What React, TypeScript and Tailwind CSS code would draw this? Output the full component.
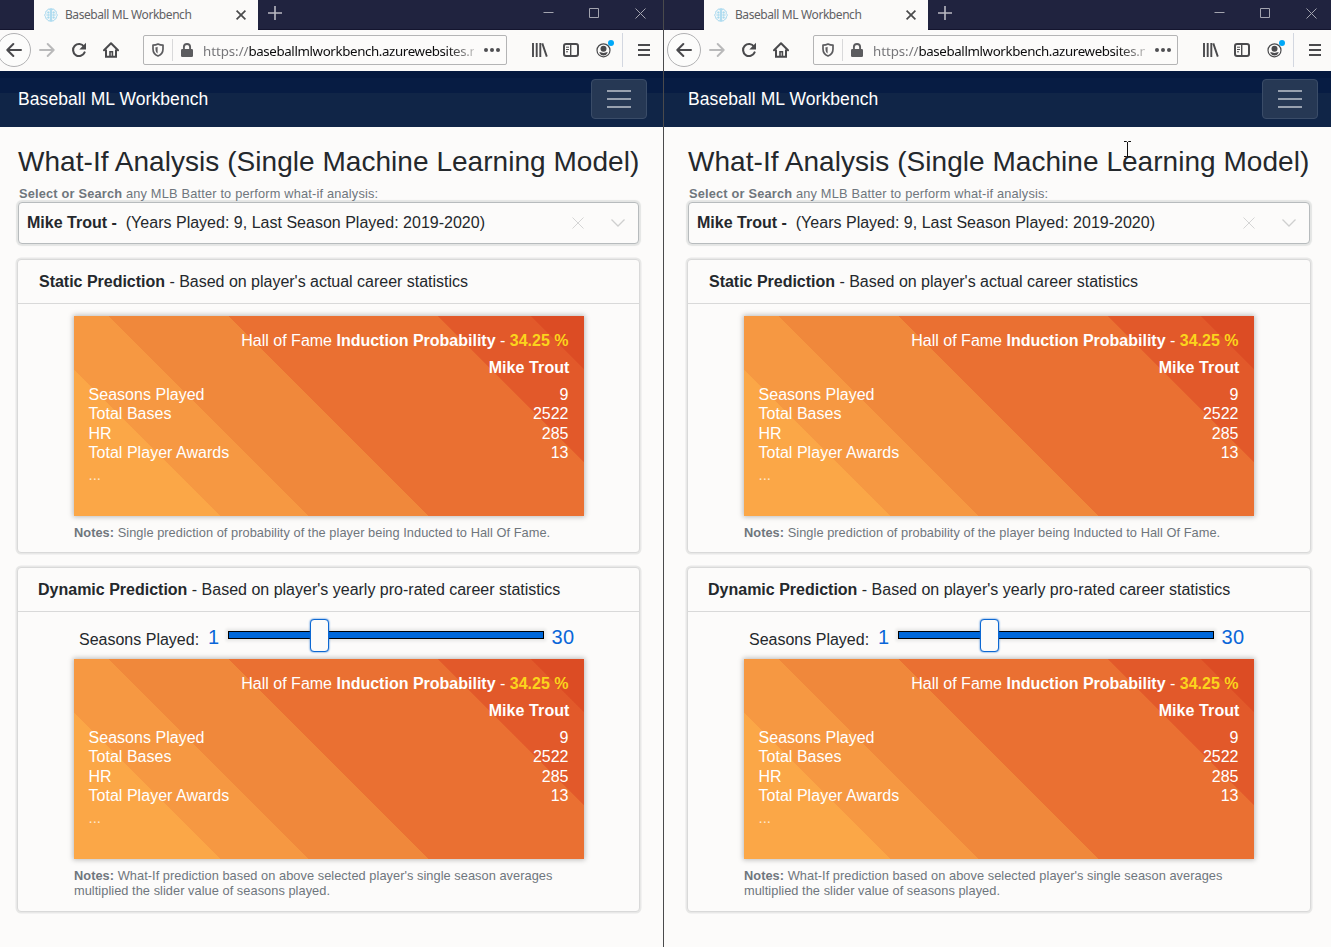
import type { ReactNode } from "react";

const STATS = [
  ["Seasons Played", "9"],
  ["Total Bases", "2522"],
  ["HR", "285"],
  ["Total Player Awards", "13"],
];

function BrainIcon() {
  return (
    <svg width="14" height="16" viewBox="0 0 14 16" fill="none" stroke="#9fd5ee" strokeWidth="1" className="shrink-0">
      <path d="M6.3 1.2v13.6M7.7 1.2v13.6" />
      <path d="M6 2.3C4 1.5 3.2 3 3.2 3.6 1.6 4 1.4 5.4 1.9 6.3.3 7.2.5 9.4 1.8 10c-.3 1.7 1 2.5 1.7 2.6.4 1.4 2 1.6 2.7.8M8 2.3c2-.8 2.8.7 2.8 1.3 1.6.4 1.8 1.8 1.3 2.7 1.6.9 1.4 3.1.1 3.7.3 1.7-1 2.5-1.7 2.6-.4 1.4-2 1.6-2.7.8" />
      <path d="M3.2 5.5h2.3M2.2 8h3.5M3.3 10.5h2.2M8.5 5.5h2.3M8.3 8h3.5M8.5 10.5h2.2M4.2 4v8M9.8 4v8" strokeWidth=".8" />
    </svg>
  );
}

function TabStrip() {
  return (
    <div className="flex h-[30px] shrink-0 bg-[#20233f] pl-[34px] shadow-[inset_0_-1px_0_#14152f]">
      <div className="flex h-[30px] w-[224px] shrink-0 items-center bg-[#fbfaf9] pl-[10px]">
        <BrainIcon />
        <span className="ml-[7px] w-[170px] whitespace-nowrap font-['Noto_Sans',sans-serif] text-[12px] leading-[30px] tracking-[-0.440px] text-[#616164] [word-spacing:0.3px]">
          Baseball ML Workbench
        </span>
        <svg width="12" height="12" viewBox="0 0 12 12" stroke="#4a4a4c" strokeWidth="1.7" className="shrink-0">
          <path d="M1.6 1.6l8.8 8.8M10.4 1.6l-8.8 8.8" />
        </svg>
      </div>
      <svg width="14" height="14" viewBox="0 0 14 14" stroke="#b9b9c2" strokeWidth="1.6" className="ml-[10px] mt-[6px]">
        <path d="M7 0v14M0 7h14" />
      </svg>
      <div className="ml-auto mr-[17px] flex gap-[35px] pt-[8px]">
        <svg width="11" height="11" viewBox="0 0 11 11" stroke="#a3a4af">
          <path d="M.5 4.5h10" />
        </svg>
        <svg width="11" height="11" viewBox="0 0 11 11" fill="none" stroke="#a3a4af">
          <path d="M.5.5h9v9h-9z" />
        </svg>
        <svg width="11" height="11" viewBox="0 0 11 11" stroke="#a3a4af">
          <path d="M.5.5l10 10M10.5.5l-10 10" />
        </svg>
      </div>
    </div>
  );
}

function Toolbar() {
  return (
    <div className="flex h-[41px] shrink-0 items-center bg-[#fbfaf9] pb-[1px]">
      <div className="-ml-[3px] flex h-[34px] w-[34px] shrink-0 items-center justify-center rounded-full border border-[#b1b1b3] bg-[#fcfcfb]">
        <svg width="16" height="16" viewBox="0 0 16 16" fill="none" stroke="#4a4a4d" strokeWidth="2" strokeLinecap="round" strokeLinejoin="round">
          <path d="M15 8H1.5M7.3 2L1.3 8l6 6" />
        </svg>
      </div>
      <svg width="16" height="16" viewBox="0 0 16 16" fill="none" stroke="#b9b9ba" strokeWidth="1.9" strokeLinecap="round" strokeLinejoin="round" className="ml-[8px] shrink-0">
        <path d="M1 8h13.5M8.7 2l6 6-6 6" />
      </svg>
      <svg width="16" height="16" viewBox="0 0 16 16" fill="none" stroke="#4a4a4d" strokeWidth="2.1" className="ml-[16px] shrink-0">
        <path d="M13 4.6A6 6 0 1 0 13.6 10.4" strokeLinecap="round" />
        <path d="M15 .8v6.7H8.3z" fill="#4a4a4d" stroke="none" />
      </svg>
      <svg width="16" height="16" viewBox="0 0 16 16" fill="none" stroke="#4a4a4d" strokeWidth="2" className="ml-[16px] shrink-0">
        <path d="M1 8.3L8 1.3l7 7" strokeLinecap="round" strokeLinejoin="round" />
        <path d="M3 7.5v7.3h10V7.5" />
        <path d="M7 15V9.7h2.4V15" strokeWidth="1.6" />
      </svg>
      <div className="ml-[24px] flex h-[30px] flex-1 items-center rounded-[2px] border border-[#b4b4b5] bg-[#fcfbfa]">
        <svg width="12" height="14" viewBox="0 0 12 14" className="ml-[8px] shrink-0">
          <path d="M6 1C4.600 1.700 2.800 2.100 1 2.100V6c0 3.200 1.700 5.700 5 7 3.300-1.300 5-3.800 5-7V2.100C9.200 2.100 7.400 1.700 6 1z" fill="none" stroke="#5c5c5f" strokeWidth="1.7" strokeLinejoin="round" />
          <path d="M5.600 3.700v6.800C4.200 9.500 3.500 8 3.500 6V4.300c.8-.1 1.500-.3 2.100-.6z" fill="#5c5c5f" />
        </svg>
        <div className="ml-[8px] h-[22px] w-px bg-[#d9d9da]" />
        <svg width="12" height="14" viewBox="0 0 12 14" className="ml-[8px] shrink-0">
          <path d="M2.900 7V4.100a3.100 3.100 0 0 1 6.200 0V7" fill="none" stroke="#5c5c5f" strokeWidth="1.900" />
          <rect x="0" y="6" width="12" height="8" rx="1.300" fill="#5c5c5f" />
        </svg>
        <div className="ml-[10px] w-0 flex-1 overflow-hidden whitespace-nowrap pt-[2px] font-['Noto_Sans',sans-serif] text-[13.3px] leading-[20px] tracking-[-0.370px] text-[#0c0c0d] [mask-image:linear-gradient(to_right,black_90%,transparent_103%)]">
          <span className="tracking-[-0.050px] text-[#77777a]">https://</span>baseballmlworkbench.azurewebsites.n
        </div>
        <svg width="16" height="4" viewBox="0 0 16 4" fill="#4f4f52" className="ml-[10px] mr-[6px] shrink-0">
          <circle cx="2" cy="2" r="2" />
          <circle cx="8" cy="2" r="2" />
          <circle cx="14" cy="2" r="2" />
        </svg>
      </div>
      <svg width="16" height="14" viewBox="0 0 16 14" stroke="#4a4a4d" strokeWidth="1.900" className="ml-[25px] shrink-0">
        <path d="M1 0v14M4.700 0v14M8.300 0v14M10.300 .4l4.500 13.200" />
      </svg>
      <svg width="16" height="14" viewBox="0 0 16 14" fill="none" stroke="#4a4a4d" className="ml-[15px] shrink-0">
        <rect x="1" y="1" width="14" height="12" rx="2" strokeWidth="2" />
        <path d="M7.700 1v12" strokeWidth="1.400" />
        <path d="M3 4.200h3M3 6.500h3M3 8.800h2" strokeWidth="1" />
      </svg>
      <div className="relative ml-[17px] h-[16px] w-[18px] shrink-0">
        <svg width="16" height="16" viewBox="0 0 16 16">
          <circle cx="7.500" cy="8.300" r="6.500" fill="none" stroke="#4a4a4d" strokeWidth="1.200" />
          <circle cx="7.500" cy="6.700" r="3" fill="#4a4a4d" />
          <path d="M3.200 10.400c1.200-.6 2.200.5 4.300.5s3.100-1.100 4.300-.5A5 5 0 0 1 7.500 13.400a5 5 0 0 1-4.300-3z" fill="#4a4a4d" />
        </svg>
        <span className="absolute -top-[2px] left-[12px] h-[6px] w-[6px] rounded-full bg-[#00a8f8]" />
      </div>
      <div className="ml-[8px] h-[34px] w-px bg-[#d3d7e0]" />
      <div className="ml-[15px] mr-[13px] flex w-[12px] shrink-0 flex-col gap-[3px]">
        <span className="h-[2px] bg-[#4a4a4d]" />
        <span className="h-[2px] bg-[#4a4a4d]" />
        <span className="h-[2px] bg-[#4a4a4d]" />
      </div>
    </div>
  );
}

function Navbar() {
  return (
    <div className="flex h-[56px] shrink-0 items-center justify-between bg-[linear-gradient(to_bottom,#04183e_0,#04183e_7px,#071c43_7px,#071c43_22px,#102547_22px)] pl-[18px] pr-[16px]">
      <span className="text-[17.5px] tracking-[0.080px] text-white">Baseball ML Workbench</span>
      <div className="flex h-[40px] w-[56px] flex-col items-center justify-center gap-[6px] rounded-[4px] border border-[#3a4c68] bg-[#263854]">
        <span className="h-[2px] w-[24px] bg-[#98a1af]" />
        <span className="h-[2px] w-[24px] bg-[#98a1af]" />
        <span className="h-[2px] w-[24px] bg-[#98a1af]" />
      </div>
    </div>
  );
}

function PredictionCard() {
  return (
    <div className="h-[200px] w-[510px] bg-[linear-gradient(45deg,#fba747_20.56%,#f69842_20.6%,#f69842_32.96%,#f0883b_33%,#f0883b_49.9%,#ea7032_49.95%,#ea7032_79.4%,#e2592a_79.45%,#e2592a_92.5%,#dc4c24_92.55%)] pl-[14.500px] pr-[15.500px] pt-[15px] text-[16px] text-white shadow-[0_0_5px_1px_rgba(0,0,0,0.25)]">
      <div className="text-right leading-[20px]">
        Hall of Fame <b>Induction Probability</b> - <b className="text-[#fbd41c]">34.25 %</b>
      </div>
      <div className="-mr-[1px] mt-[7px] text-right font-bold leading-[20px] tracking-[0.080px]">Mike Trout</div>
      <div className="mt-[7px] leading-[19.400px]">
        {STATS.map(([label, value]) => (
          <div key={label} className="flex justify-between">
            <span className="tracking-[0.030px]">{label}</span>
            <span>{value}</span>
          </div>
        ))}
      </div>
      <div className="mt-[4px] text-[15px] leading-[16px] text-[#ffe9cf]">...</div>
    </div>
  );
}

function Panel({ title, text, titleClass, children }: { title: string; text: string; titleClass: string; children: ReactNode }) {
  return (
    <section className="-mx-px rounded-[4px] border border-[#d9d9d9] bg-[#fcfbfa] shadow-[0_0_0_1.500px_#e8e8e7]">
      <div className={`h-[44px] border-b border-[#d9d9d9] text-[16px] leading-[44px] text-[#24282c] ${titleClass}`}>
        <b>{title}</b> - {text}
      </div>
      {children}
    </section>
  );
}

function Notes({ children }: { children: ReactNode }) {
  return (
    <p className="w-[500px] text-[12.800px] leading-[15px] tracking-[0.045px] text-[#6f767d]">
      <b>Notes:</b> {children}
    </p>
  );
}

function Slider() {
  return (
    <div className="flex h-[47px] items-center pl-[5px]">
      <span className="mt-[8px] text-[16px] text-[#24282c]">Seasons Played:</span>
      <span className="ml-[9px] mt-[3px] w-[12px] text-[20px] text-[#0a66d8]">1</span>
      <div className="relative -mt-[2px] ml-[8px] h-[8px] w-[315.500px] border border-black bg-[#0068da] shadow-[0_0_3px_2px_#e6e6e5]">
        <span className="absolute -top-[13px] left-[81px] h-[33px] w-[19px] rounded-[4px] border-[1.500px] border-[#0d68d2] bg-[#fcfbfa] shadow-[0_0_2px_#0d68d2]" />
      </div>
      <span className="ml-[8px] mt-[3px] text-[20px] tracking-[0.200px] text-[#0a66d8]">30</span>
    </div>
  );
}

function Page() {
  return (
    <main className="flex-1 bg-[#fcfbfa] pl-[18px] pr-[24px]">
      <h1 className="whitespace-nowrap pt-[18px] text-[28px] leading-[34px] tracking-[0.040px] text-[#24282c]">What-If Analysis (Single Machine Learning Model)</h1>
      <p className="pl-px pt-[6px] text-[12.800px] leading-[17px] tracking-[0.180px] text-[#6f767d]">
        <b>Select or Search</b> any MLB Batter to perform what-if analysis:
      </p>
      <div className="flex h-[42px] items-center rounded-[4px] border border-[#b7bbbd] bg-[#fcfbfa] pl-[8px] pr-[12px] text-[16px] text-[#24282c] shadow-[0_0_1px_2px_#e4e5e4]">
        <b>Mike Trout -</b>
        <span className="ml-[9px] tracking-[0.010px]">(Years Played: 9, Last Season Played: 2019-2020)</span>
        <svg width="12" height="12" viewBox="0 0 12 12" stroke="#d5d5d5" className="ml-auto">
          <path d="M.5.5l11 11M11.500.5l-11 11" />
        </svg>
        <svg width="16" height="10" viewBox="0 0 16 10" fill="none" stroke="#cfcfcf" strokeWidth="1.300" className="ml-[26px]">
          <path d="M1.500 1.500L8 8l6.500-6.500" />
        </svg>
      </div>
      <div className="mt-[15px]">
        <Panel title="Static Prediction" text="Based on player's actual career statistics" titleClass="pl-[21px] tracking-[-0.015px]">
          <div className="h-[248px] pl-[56px] pt-[12px]">
            <PredictionCard />
            <div className="mt-[9px]">
              <Notes>Single prediction of probability of the player being Inducted to Hall Of Fame.</Notes>
            </div>
          </div>
        </Panel>
      </div>
      <div className="mt-[14px]">
        <Panel title="Dynamic Prediction" text="Based on player's yearly pro-rated career statistics" titleClass="pl-[20px]">
          <div className="h-[299px] pl-[56px]">
            <Slider />
            <PredictionCard />
            <div className="mt-[9px]">
              <Notes>What-If prediction based on above selected player's single season averages multiplied the slider value of seasons played.</Notes>
            </div>
          </div>
        </Panel>
      </div>
    </main>
  );
}

function BrowserWindow({ width }: { width: string }) {
  return (
    <div className={`flex h-[947px] shrink-0 flex-col ${width}`}>
      <TabStrip />
      <Toolbar />
      <Navbar />
      <Page />
    </div>
  );
}

export default function App() {
  return (
    <div className="relative flex h-[947px] w-[1331px] overflow-hidden bg-[#fcfbfa] font-['Liberation_Sans',Arial,sans-serif]">
      <BrowserWindow width="w-[663px]" />
      <div className="w-px shrink-0 bg-[#4a4a4c]" />
      <div className="flex w-[667px] overflow-hidden bg-[linear-gradient(to_bottom,#20233f_30px,#fbfaf9_30px,#fbfaf9_71px,#04183e_71px,#04183e_78px,#071c43_78px,#071c43_93px,#102547_93px,#102547_127px,#fcfbfa_127px)] pl-[6px]">
        <BrowserWindow width="w-[664px]" />
      </div>
      <svg width="9" height="17" viewBox="0 0 9 17" fill="none" stroke="#111" className="absolute left-[1123px] top-[141px]">
        <path d="M1 .5h2.500l1 1 1-1H8M4.500 1v15M1 15.500h2.500l1-1 1 1H8" />
      </svg>
    </div>
  );
}
